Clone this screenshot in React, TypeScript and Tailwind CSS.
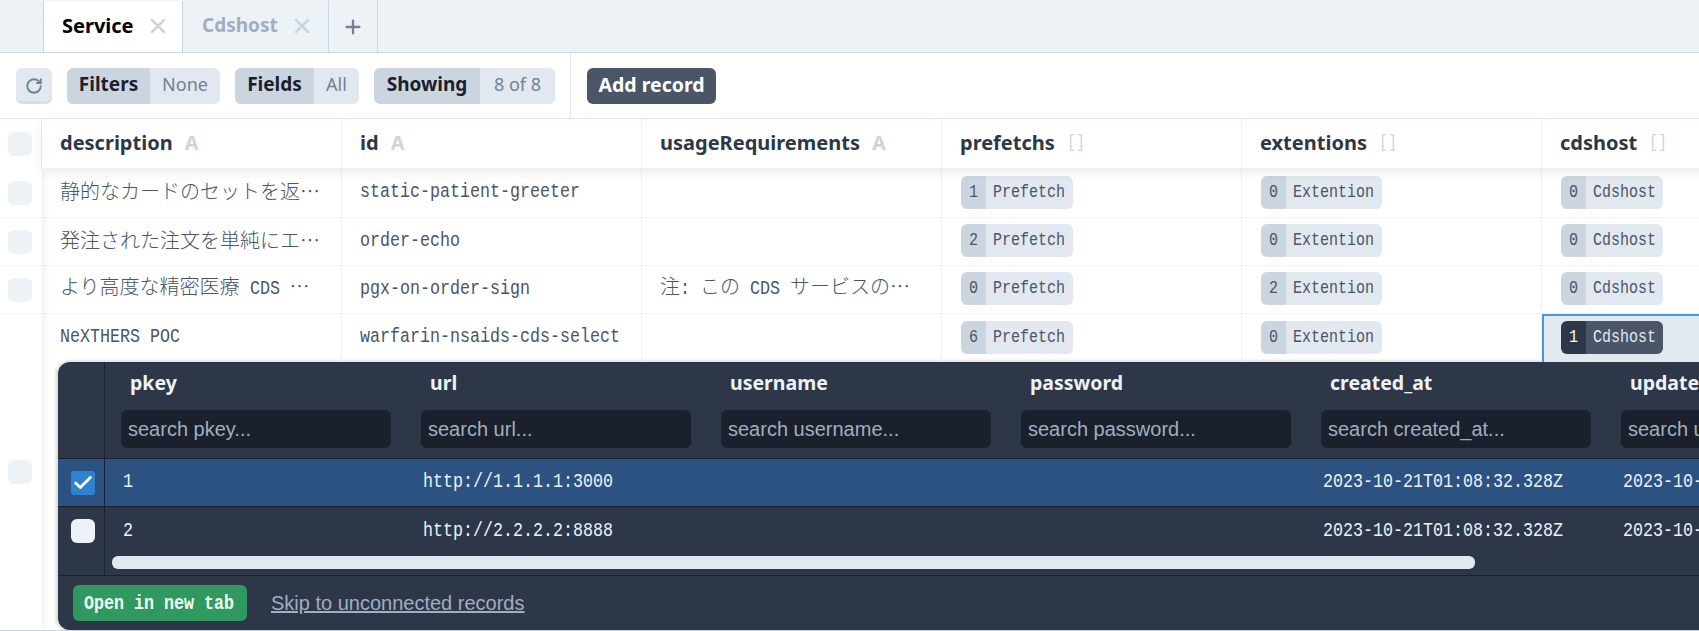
import React from "react";
import { Check, Plus, RotateCw, X } from "lucide-react";

const UI = "font-['Noto_Sans',sans-serif]";
const ARIAL = "font-['Liberation_Sans',sans-serif] text-[20px]";
const MONO_FACE = "font-['Liberation_Mono',monospace]";
const CJK = "mb-[2px] block font-['Noto_Sans_CJK_JP',sans-serif] text-[20px] font-light text-[#4a5568]";

/* Narrow half-width text: the reference's glyphs are tall and take 10px each */
function M({ children, w = "w-0", size = "text-[20px]", className = "" }: { children?: React.ReactNode; w?: string; size?: string; className?: string }) {
  return <span className={`inline-block ${w} origin-left scale-x-[0.8333] whitespace-nowrap ${MONO_FACE} ${size} ${className}`}>{children}</span>;
}

function Pair({ a, b, aw, bw }: { a: string; b: string; aw: string; bw: string }) {
  return (
    <div className="flex h-9 overflow-hidden rounded-md shadow-[inset_0_-3px_0_rgba(0,0,0,0.04)]">
      <div className={`${aw} flex items-center justify-center bg-[#cbd5e0] pb-[2px] text-[19px] font-bold text-[#1a202c]`}>{a}</div>
      <div className={`${bw} flex items-center justify-center bg-[#e2e8f0] pb-[2px] text-[18px] font-normal text-[#718096]`}>{b}</div>
    </div>
  );
}

function Badge({ n, label, w, active }: { n: number; label: string; w: string; active?: boolean }) {
  return (
    <div className={`${w} flex h-[33px] overflow-hidden rounded-md shadow-[inset_0_-3px_0_rgba(0,0,0,0.08)] ${active ? "text-[#e2e8f0]" : "text-[#4a5568]"}`}>
      <div className={`flex w-[25px] shrink-0 items-center pl-2 ${active ? "bg-[#2d3748] text-white" : "bg-[#cbd5e0]"}`}>
        <M size="text-[18px]">{n}</M>
      </div>
      <div className={`flex flex-1 items-center pl-[7px] ${active ? "bg-[#4a5568]" : "bg-[#e2e8f0]"}`}>
        <M size="text-[18px]">{label}</M>
      </div>
    </div>
  );
}

function Box() {
  return <div className="h-6 w-6 rounded-md bg-[#edf2f7]" />;
}

function HeaderCell({ name, kind }: { name: string; kind: string }) {
  return (
    <div className="flex h-full w-[300px] shrink-0 items-center gap-3 border-r border-[#edf2f7] pb-[2px] pl-[18px]">
      <span className="text-[20px] font-bold text-[#2d3748]">{name}</span>
      {kind === "A" ? (
        <span className="text-[20px] font-bold text-[#cbd5e0]">A</span>
      ) : (
        <M w="w-[18px]" size="text-[18px]" className="text-[#cbd5e0]">[]</M>
      )}
    </div>
  );
}

function Cell({ children }: { children?: React.ReactNode }) {
  return (
    <div className="flex h-full w-[300px] shrink-0 items-center overflow-hidden whitespace-nowrap border-r border-[#edf2f7] pb-[2px] pl-[18px] text-[#4a5568]">
      {children}
    </div>
  );
}

function BadgeCell({ n, label, w }: { n: number; label: string; w: string }) {
  return (
    <div className="flex h-full w-[300px] shrink-0 items-center border-r border-[#edf2f7] pb-[2px] pl-[19px]">
      <Badge n={n} label={label} w={w} />
    </div>
  );
}

const PW = "w-[112px]";
const EW = "w-[121px]";
const CW = "w-[102px]";

function Row({ desc, id, usage, p, e, c, h = "h-12" }: { desc: React.ReactNode; id: string; usage?: React.ReactNode; p: number; e: number; c: number; h?: string }) {
  return (
    <div className={`flex ${h} w-[1900px] border-b border-[#edf2f7]`}>
      <Cell>{desc}</Cell>
      <Cell><M>{id}</M></Cell>
      <Cell>{usage}</Cell>
      <BadgeCell n={p} label="Prefetch" w={PW} />
      <BadgeCell n={e} label="Extention" w={EW} />
      <BadgeCell n={c} label="Cdshost" w={CW} />
    </div>
  );
}

const panelCols = ["pkey", "url", "username", "password", "created_at", "updated_at"];

function PanelRow({ pkey, url, selected, last }: { pkey: string; url: string; selected?: boolean; last?: boolean }) {
  const stamp = "2023-10-21T01:08:32.328Z";
  const vals = [pkey, url, "", "", stamp, stamp];
  return (
    <div className={`flex h-12 ${last ? "" : "border-b border-[#1a202c]"} ${selected ? "bg-[#2c5282]" : ""}`}>
      <div className="flex w-[47px] shrink-0 items-center justify-center border-r border-[#1a202c] pl-[3px]">
        {selected ? (
          <div className="flex h-6 w-6 items-center justify-center rounded-[3px] bg-[#3182ce]">
            <Check size={22} strokeWidth={3} className="text-white" />
          </div>
        ) : (
          <Box />
        )}
      </div>
      {vals.map((v, i) => (
        <div key={i} className={`flex w-[300px] shrink-0 items-center pl-[18px] text-[#edf2f7] ${last ? "" : "pb-[2px]"}`}>
          <M>{v}</M>
        </div>
      ))}
    </div>
  );
}

export default function App() {
  return (
    <div className={`h-[631px] w-[1699px] overflow-hidden bg-white ${UI}`}>
      {/* tabs */}
      <div className="flex h-[53px] items-end border-b border-[#cbd5e0] bg-[#edf2f7] pl-[43px]">
        <div className="flex h-[51px] w-[140px] items-center gap-3 border-x border-[#cbd5e0] bg-white pb-[2px] pl-[18px]">
          <span className="text-[20px] font-bold text-black">Service</span>
          <X size={24} strokeWidth={2.5} className="text-[#cbd5e0]" />
        </div>
        <div className="flex h-[51px] w-[146px] items-center gap-3 border-r border-[#cbd5e0] pb-[2px] pl-[19px]">
          <span className="text-[19px] font-bold text-[#a0aec0]">Cdshost</span>
          <X size={24} strokeWidth={2.5} className="text-[#cbd5e0]" />
        </div>
        <div className="flex h-[51px] w-[49px] items-center justify-center border-r border-[#cbd5e0]">
          <Plus size={22} strokeWidth={2.5} className="text-[#718096]" />
        </div>
      </div>
      {/* toolbar */}
      <div className="flex h-[66px] items-stretch border-b border-[#e2e8f0]">
        <div className="flex w-[571px] items-center gap-[15px] border-r border-[#e2e8f0] pl-4">
          <div className="flex h-9 w-9 items-center justify-center rounded-md bg-[#e2e8f0] shadow-[inset_0_-3px_0_rgba(0,0,0,0.04)]">
            <RotateCw size={18} strokeWidth={2.5} className="text-[#718096]" />
          </div>
          <Pair a="Filters" b="None" aw="w-[83px]" bw="w-[70px]" />
          <Pair a="Fields" b="All" aw="w-[79px]" bw="w-[45px]" />
          <Pair a="Showing" b="8 of 8" aw="w-[106px]" bw="w-[75px]" />
        </div>
        <div className="flex items-center pl-4">
          <div className="flex h-9 w-[129px] items-center justify-center rounded-md bg-[#4a5568] pb-[2px] text-[19.5px] font-bold text-white">Add record</div>
        </div>
      </div>
      {/* table header */}
      <div className="relative z-20 flex h-[50px] w-[1699px]">
        <div className="flex h-full w-[42px] shrink-0 items-center justify-center border-r border-[#edf2f7] pr-[2px]">
          <Box />
        </div>
        <div className="flex h-[49px] shrink-0 bg-white shadow-[0_5px_10px_rgba(0,0,0,0.08)]">
          <HeaderCell name="description" kind="A" />
          <HeaderCell name="id" kind="A" />
          <HeaderCell name="usageRequirements" kind="A" />
          <HeaderCell name="prefetchs" kind="[]" />
          <HeaderCell name="extentions" kind="[]" />
          <HeaderCell name="cdshost" kind="[]" />
        </div>
      </div>
      {/* body */}
      <div className="flex h-[462px] overflow-hidden border-b border-[#cbd5e0]">
        <div className="relative z-10 w-[42px] shrink-0 bg-white shadow-[3px_0_6px_rgba(0,0,0,0.06)]">
          {["h-[49px]", "h-12", "h-12"].map((h, i) => (
            <div key={i} className={`flex ${h} items-center justify-center border-b border-[#edf2f7] pr-[2px]`}>
              <Box />
            </div>
          ))}
          <div className="flex h-[316px] items-center justify-center pr-[2px]">
            <Box />
          </div>
        </div>
        <div className="min-w-0 flex-1 overflow-hidden">
          <Row h="h-[49px]" desc={<span className={CJK}>静的なカードのセットを返…</span>} id="static-patient-greeter" p={1} e={0} c={0} />
          <Row desc={<span className={CJK}>発注された注文を単純にエ…</span>} id="order-echo" p={2} e={0} c={0} />
          <Row
            desc={
              <span className={CJK}>
                より高度な精密医療<M w="w-[10px]" />
                <M w="w-[30px]">CDS</M>
                <M w="w-[10px]" />…
              </span>
            }
            id="pgx-on-order-sign"
            usage={
              <span className={CJK}>
                注<M w="w-[20px]">: </M>この<M w="w-[10px]" />
                <M w="w-[30px]">CDS</M>
                <M w="w-[10px]" />サービスの…
              </span>
            }
            p={0}
            e={2}
            c={0}
          />
          {/* expanded row */}
          <div className="flex h-12 w-[1900px]">
            <Cell><M>NeXTHERS POC</M></Cell>
            <Cell><M>warfarin-nsaids-cds-select</M></Cell>
            <Cell />
            <BadgeCell n={6} label="Prefetch" w={PW} />
            <BadgeCell n={0} label="Extention" w={EW} />
            <div className="flex h-full w-[300px] shrink-0 items-center border-2 border-b-0 border-[#4299e1] bg-[#e2e8f0] pb-1 pl-[17px]">
              <Badge n={1} label="Cdshost" w={CW} active />
            </div>
          </div>
          {/* linked panel */}
          <div className="ml-[16px] h-[268px] overflow-hidden rounded-l-xl bg-[#2d3748] shadow-[-1px_0_4px_rgba(0,0,0,0.25)]">
            <div className="w-[1900px]">
              <div className="flex h-[97px] border-b border-[#1a202c]">
                <div className="w-[47px] shrink-0 border-r border-[#1a202c]" />
                {panelCols.map((c) => (
                  <div key={c} className="flex w-[300px] shrink-0 flex-col pl-4 pt-[9px]">
                    <div className="pl-[9px] text-[19.5px] font-bold leading-[24px] text-[#edf2f7]">{c}</div>
                    <div className={`mt-[15px] flex h-[38px] w-[270px] items-center rounded-md bg-[#1a202c] pl-[7px] text-[#a0aec0] ${ARIAL}`}>search {c}...</div>
                  </div>
                ))}
              </div>
              <PanelRow pkey="1" url="http://1.1.1.1:3000" selected />
              <PanelRow pkey="2" url="http://2.2.2.2:8888" last />
              <div className="flex h-[21px] border-b border-[#1a202c]">
                <div className="w-[47px] shrink-0 border-r border-[#1a202c]" />
                <div className="ml-[7px] mt-[1px] h-[13px] w-[1363px] rounded-md bg-[#e2e8f0]" />
              </div>
              <div className="flex h-[53px] items-center gap-6 pl-[15px]">
                <div className="flex h-9 w-[174px] items-center rounded-md bg-[#2f9960] pl-[11px] pt-[2px] font-bold text-[#f0fff4]">
                  <M>Open in new tab</M>
                </div>
                <span className={`text-[#a0aec0] underline ${ARIAL}`}>Skip to unconnected records</span>
              </div>
            </div>
          </div>
        </div>
      </div>
    </div>
  );
}
